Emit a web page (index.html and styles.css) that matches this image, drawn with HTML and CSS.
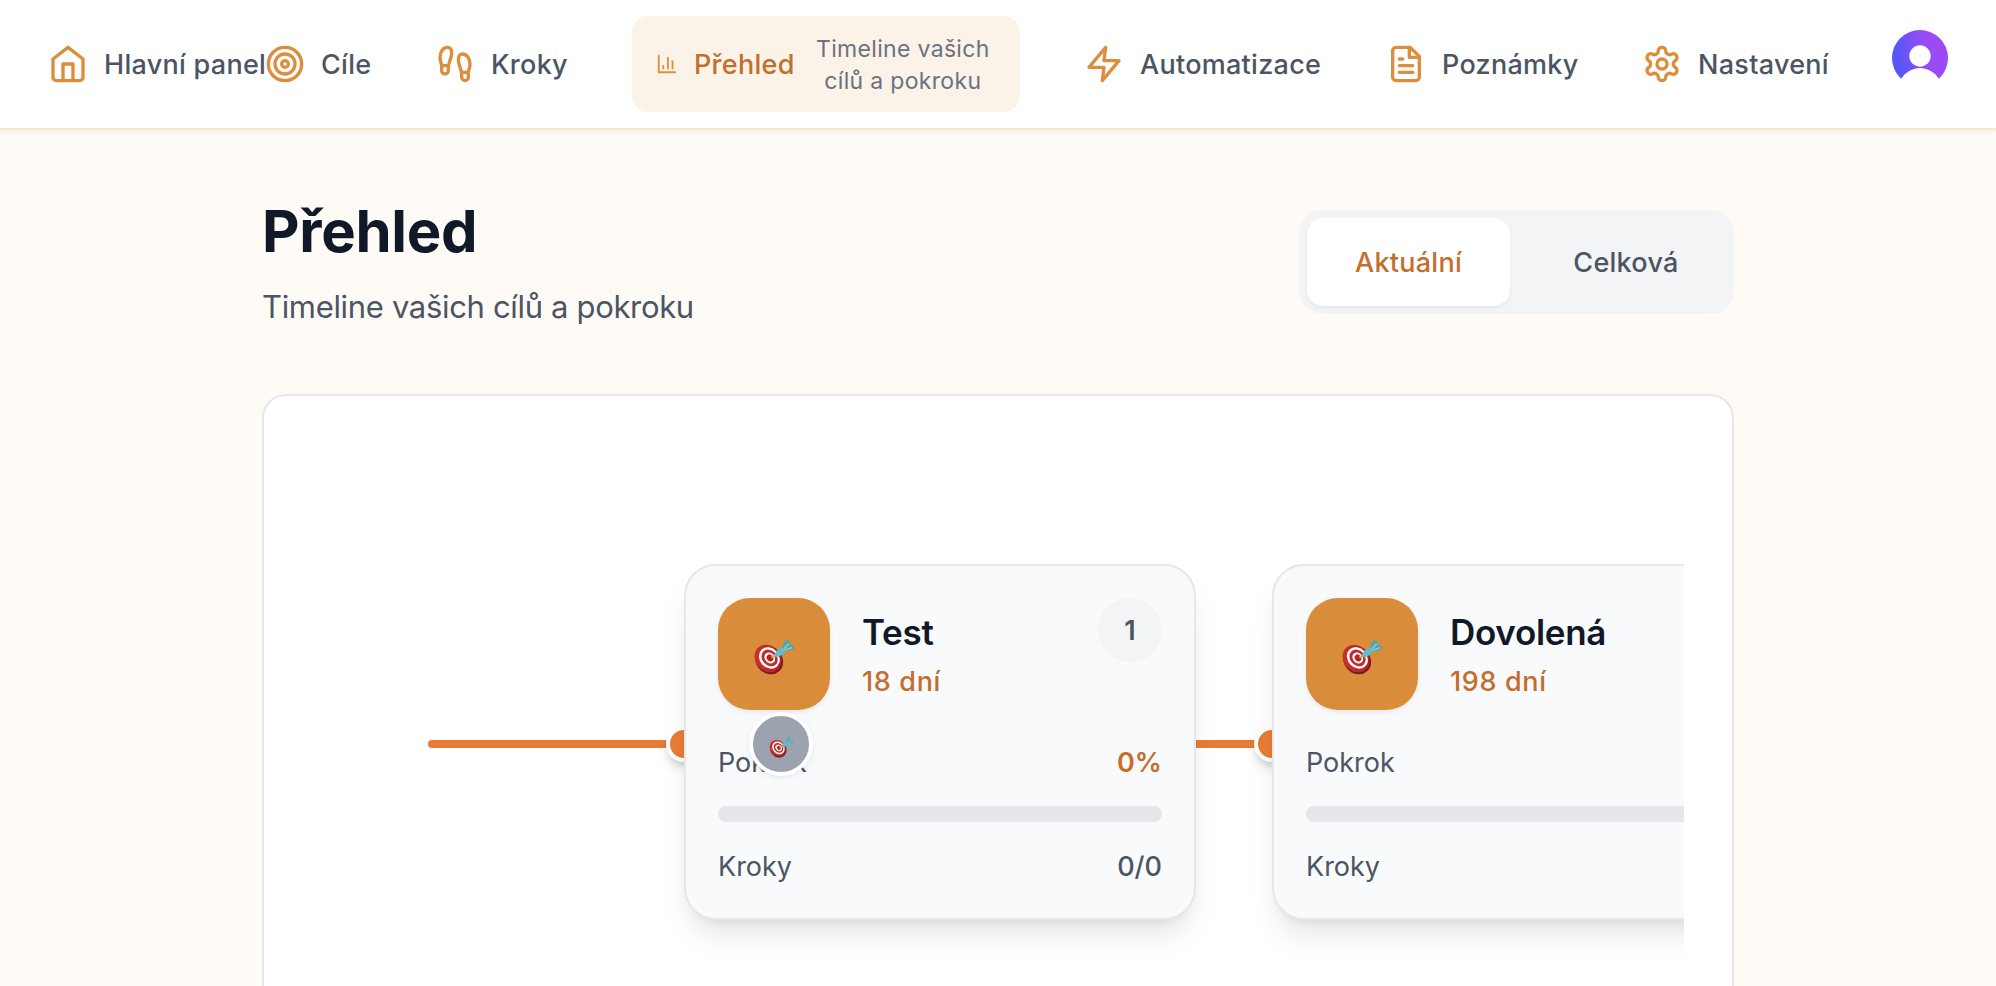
FILE: index.html
```html
<!DOCTYPE html>
<html lang="cs">
<head>
<meta charset="utf-8">
<title>Přehled</title>
<link rel="stylesheet" href="styles.css">
</head>
<body>
<svg class="defs" width="0" height="0" aria-hidden="true">
  <defs>
    <linearGradient id="face" x1="0" y1="0" x2="1" y2="1"><stop offset="0" stop-color="#d5322e"/><stop offset="1" stop-color="#a81f20"/></linearGradient>
    <linearGradient id="avatar-fill" x1="0" y1="0.6" x2="1" y2="0.4"><stop offset="0.1" stop-color="#5457f8"/><stop offset="0.65" stop-color="#9b4bf4"/></linearGradient>
  </defs>
  <symbol id="dart" viewBox="0 0 40 36">
    <ellipse cx="14.8" cy="21.6" rx="12.8" ry="14.6" transform="rotate(-42 14.8 21.6)" fill="#7c1a1b"/>
    <ellipse cx="13.800" cy="20" rx="12.2" ry="14.400" transform="rotate(-42 13.8 20)" fill="url(#face)"/>
    <ellipse cx="15" cy="19.4" rx="9.4" ry="11.200" transform="rotate(-42 15 19.4)" fill="#fff"/>
    <ellipse cx="15.2" cy="19.4" rx="7.200" ry="8.800" transform="rotate(-42 15.2 19.4)" fill="#c42a29"/>
    <ellipse cx="15.4" cy="19.4" rx="4.8" ry="5.8" transform="rotate(-42 15.4 19.4)" fill="#fff"/>
    <ellipse cx="15.6" cy="19.4" rx="3" ry="3.6" transform="rotate(-42 15.6 19.4)" fill="#b52323"/>
    <path d="M17 19l5-3.600" stroke="#d8b23a" stroke-width="2"/>
    <path d="M20 17.400c0-3.600 3.400-7.400 8.200-8.600l3 3c-1.800 3.800-6.200 6.400-9.800 6.800z" fill="#62bccb"/>
    <path d="M27.600 9.800C28 6 30 2.600 33.200.4l1.600 4.200-.4 3 2.400-.8 3.200 3.200c-3.400 2-6.600 2.800-9.800 2.600z" fill="#4fa6b4"/>
    <path d="M28.800 11l5-5.400M30 11.800l7-2.400" stroke="#86d4de" stroke-width="1.200"/>
  </symbol>
</svg>

<header class="topbar">
  <nav class="nav">
    <a class="nav-item nav-home"><svg class="icon" viewBox="0 0 24 24"><path d="m3 9 9-7 9 7v11a2 2 0 0 1-2 2H5a2 2 0 0 1-2-2z"/><path d="M9 22V12h6v10"/></svg><span class="label">Hlavní panel</span></a>
    <a class="nav-item nav-goals"><svg class="icon" viewBox="0 0 24 24"><circle cx="12" cy="12" r="10"/><circle cx="12" cy="12" r="6"/><circle cx="12" cy="12" r="2"/></svg><span class="label">Cíle</span></a>
    <a class="nav-item nav-steps"><svg class="icon" viewBox="0 0 24 24"><path d="M4 16v-2.380C4 11.500 2.970 10.500 3 8c.03-2.720 1.490-6 4.500-6C9.370 2 10 3.800 10 5.500c0 3.110-2 5.660-2 8.680V16a2 2 0 1 1-4 0Z"/><path d="M20 20v-2.380c0-2.120 1.030-3.120 1-5.620-.03-2.720-1.490-6-4.500-6C14.630 6 14 7.800 14 9.500c0 3.110 2 5.660 2 8.680V20a2 2 0 1 0 4 0Z"/><path d="M16 17h4"/><path d="M4 13h4"/></svg><span class="label">Kroky</span></a>
    <a class="nav-item nav-overview"><svg class="icon icon-small" viewBox="0 0 24 24"><path d="M3 3v18h18"/><path d="M18 17V9"/><path d="M13 17V5"/><path d="M8 17v-3"/></svg><span class="label">Přehled</span><span class="hint">Timeline vašich cílů a pokroku</span></a>
    <a class="nav-item nav-auto"><svg class="icon" viewBox="0 0 24 24"><path d="M13 2 3 14h9l-1 8 10-12h-9l1-8z"/></svg><span class="label">Automatizace</span></a>
    <a class="nav-item nav-notes"><svg class="icon" viewBox="0 0 24 24"><path d="M14.500 2H6a2 2 0 0 0-2 2v16a2 2 0 0 0 2 2h12a2 2 0 0 0 2-2V7.500L14.500 2z"/><path d="M14 2v6h6"/><path d="M16 13H8"/><path d="M16 17H8"/><path d="M10 9H8"/></svg><span class="label">Poznámky</span></a>
    <a class="nav-item nav-settings"><svg class="icon" viewBox="0 0 24 24"><path d="M12.220 2h-.44a2 2 0 0 0-2 2v.18a2 2 0 0 1-1 1.730l-.43.25a2 2 0 0 1-2 0l-.15-.08a2 2 0 0 0-2.730.73l-.22.38a2 2 0 0 0 .73 2.730l.15.1a2 2 0 0 1 1 1.720v.51a2 2 0 0 1-1 1.740l-.15.09a2 2 0 0 0-.73 2.730l.22.38a2 2 0 0 0 2.730.73l.15-.08a2 2 0 0 1 2 0l.43.25a2 2 0 0 1 1 1.730V20a2 2 0 0 0 2 2h.44a2 2 0 0 0 2-2v-.18a2 2 0 0 1 1-1.730l.43-.25a2 2 0 0 1 2 0l.15.08a2 2 0 0 0 2.730-.73l.22-.39a2 2 0 0 0-.73-2.730l-.15-.08a2 2 0 0 1-1-1.740v-.5a2 2 0 0 1 1-1.740l.15-.09a2 2 0 0 0 .73-2.730l-.22-.38a2 2 0 0 0-2.730-.73l-.15.08a2 2 0 0 1-2 0l-.43-.25a2 2 0 0 1-1-1.730V4a2 2 0 0 0-2-2z"/><circle cx="12" cy="12" r="3"/></svg><span class="label">Nastavení</span></a>
  </nav>
  <svg class="avatar" viewBox="0 0 56 56"><circle cx="28" cy="28" r="28" fill="url(#avatar-fill)"/><circle cx="28" cy="26" r="10.700" fill="#fff"/><circle cx="28" cy="59.500" r="21.500" fill="#fff"/></svg>
</header>

<main class="page">
  <div class="page-head">
    <div class="heading">
      <h1 class="title">Přehled</h1>
      <p class="subtitle">Timeline vašich cílů a pokroku</p>
    </div>
    <div class="toggle">
      <button class="toggle-btn toggle-active">Aktuální</button>
      <button class="toggle-btn">Celková</button>
    </div>
  </div>

  <section class="panel">
    <div class="timeline">
      <div class="track"></div>
      <span class="dot dot-first"></span>
      <span class="dot dot-second"></span>
      <div class="goals">
        <article class="goal">
          <div class="goal-head">
            <div class="goal-icon"><svg class="goal-emoji"><use href="#dart"/></svg></div>
            <div class="goal-text"><h2 class="goal-name">Test</h2><p class="goal-days">18 dní</p></div>
            <span class="goal-count">1</span>
          </div>
          <div class="row"><span>Pokrok</span><span class="percent">0%</span></div>
          <div class="bar"></div>
          <div class="row"><span>Kroky</span><span class="steps">0/0</span></div>
        </article>
        <article class="goal">
          <div class="goal-head">
            <div class="goal-icon"><svg class="goal-emoji"><use href="#dart"/></svg></div>
            <div class="goal-text"><h2 class="goal-name">Dovolená</h2><p class="goal-days">198 dní</p></div>
          </div>
          <div class="row"><span>Pokrok</span></div>
          <div class="bar"></div>
          <div class="row"><span>Kroky</span></div>
        </article>
      </div>
      <span class="marker"><svg class="marker-emoji"><use href="#dart"/></svg></span>
    </div>
  </section>
</main>
</body>
</html>
```
FILE: styles.css
```css
* { box-sizing: border-box; margin: 0; }

body {
  height: 986px;
  overflow: hidden;
  background: #fefbf6;
  color: #4b5563;
  font: 400 27px/40px Inter, "Noto Sans", sans-serif;
}

.defs { position: absolute; }

/* Top navigation */
.topbar {
  display: flex;
  height: 130px;
  padding: 0 48px;
  background: #fff;
  border-bottom: 2px solid #f8e6cd;
  box-shadow: 0 2px 4px rgba(0, 0, 0, 0.05);
}

.nav { display: flex; align-items: center; }

.nav-item {
  display: flex;
  flex: none;
  align-items: center;
  gap: 16px;
  font-weight: 500;
  letter-spacing: 0.28px;
  white-space: nowrap;
}

.label { padding-top: 2px; }

.nav-home { width: 217px; }
.nav-goals { width: 170px; }
.nav-steps { width: 197px; }
.nav-auto { width: 302px; margin-left: 64px; }
.nav-notes { width: 256px; }
.nav-settings { width: 250px; }

.nav-overview {
  width: 388px;
  height: 96px;
  padding: 0 24px;
  border-radius: 16px;
  background: #fbf3e8;
  color: #c56d2b;
}

.icon {
  flex: none;
  width: 40px;
  height: 40px;
  fill: none;
  stroke: #db8e3b;
  stroke-width: 2;
  stroke-linecap: round;
  stroke-linejoin: round;
}

.icon-small { width: 22px; height: 22px; }

.hint {
  width: 188px;
  margin-left: -1px;
  padding-top: 2px;
  color: #6b7280;
  font-size: 23px;
  font-weight: 400;
  letter-spacing: 0.32px;
  line-height: 32px;
  text-align: center;
  white-space: normal;
}

.avatar { flex: none; width: 56px; height: 56px; margin-top: 30px; }

/* Page heading */
.page { width: 1472px; margin: 0 auto; }

.page-head {
  display: flex;
  justify-content: space-between;
  height: 264px;
  padding-top: 64px;
}

.title {
  margin-top: 1px;
  color: #111827;
  font-size: 58px;
  font-weight: 700;
  letter-spacing: -0.3px;
  line-height: 72px;
}

.subtitle {
  margin-top: 16px;
  font-size: 31px;
  letter-spacing: -0.33px;
  line-height: 48px;
}

.toggle {
  display: flex;
  gap: 16px;
  width: 435px;
  height: 104px;
  margin-top: 16px;
  padding: 8px;
  border-radius: 24px;
  background: #f3f4f6;
}

.toggle-btn {
  flex: none;
  width: 200px;
  padding: 2px 0 0;
  border: 0;
  border-radius: 16px;
  background: none;
  color: #4b5563;
  font: inherit;
  font-weight: 500;
  letter-spacing: 0.28px;
}

.toggle-active {
  width: 203px;
  background: #fff;
  color: #c56d2b;
  box-shadow: 0 2px 4px rgba(0, 0, 0, 0.06);
}

/* Timeline */
.panel {
  height: 700px;
  padding: 48px;
  border: 2px solid #e5e7eb;
  border-radius: 24px;
  background: #fff;
}

.timeline {
  position: relative;
  height: 600px;
  padding: 120px 0 0 372px;
  overflow: hidden;
}

.track {
  position: absolute;
  top: 296px;
  left: 116px;
  width: 1600px;
  height: 8px;
  border-radius: 4px;
  background: #e87c36;
}

.dot {
  position: absolute;
  top: 282px;
  width: 36px;
  height: 36px;
  border: 4px solid #fff;
  border-radius: 50%;
  background: #e87c36;
  box-shadow: 0 8px 12px -2px rgba(0, 0, 0, 0.14), 0 4px 8px -4px rgba(0, 0, 0, 0.14);
}

.dot-first { left: 354px; }
.dot-second { left: 942px; }

.goals { position: relative; display: flex; gap: 76px; }

.goal {
  display: flex;
  flex: none;
  flex-direction: column;
  gap: 24px;
  width: 512px;
  height: 356px;
  padding: 32px;
  border: 2px solid #e5e7eb;
  border-radius: 32px;
  background: #f9fafc;
  box-shadow: 0 20px 30px -6px rgba(0, 0, 0, 0.1), 0 8px 12px -8px rgba(0, 0, 0, 0.1);
}

.goal-head { display: flex; gap: 32px; height: 112px; margin-bottom: 8px; }

.goal-icon {
  display: flex;
  flex: none;
  align-items: flex-start;
  justify-content: center;
  width: 112px;
  height: 112px;
  padding-top: 40px;
  border-radius: 32px;
  background: #d98c39;
  box-shadow: 0 2px 5px rgba(0, 0, 0, 0.08);
}

.goal-emoji { width: 41px; height: 37px; }

.goal-text { flex: 1; padding-top: 6px; }

.goal-name {
  color: #111827;
  font-size: 35px;
  font-weight: 600;
  letter-spacing: -0.3px;
  line-height: 56px;
}

.goal-days {
  padding-top: 2px;
  color: #c56d2b;
  font-weight: 500;
  letter-spacing: 0.65px;
}

.goal-count {
  width: 64px;
  height: 64px;
  padding-top: 1px;
  border-radius: 50%;
  background: #f3f4f6;
  font-weight: 600;
  line-height: 64px;
  text-align: center;
}

.row { display: flex; justify-content: space-between; height: 40px; padding-top: 1px; }

.percent { color: #c56d2b; font-weight: 600; }
.steps { font-weight: 500; }

.bar { height: 16px; border-radius: 8px; background: #e5e7eb; }

.marker {
  position: absolute;
  top: 268px;
  left: 437px;
  display: flex;
  justify-content: center;
  width: 64px;
  height: 64px;
  padding-top: 20px;
  border: 4px solid #fff;
  border-radius: 50%;
  background: #9ca3af;
  box-shadow: 0 2px 6px rgba(0, 0, 0, 0.08);
}

.marker-emoji { width: 25px; height: 22px; }
```
